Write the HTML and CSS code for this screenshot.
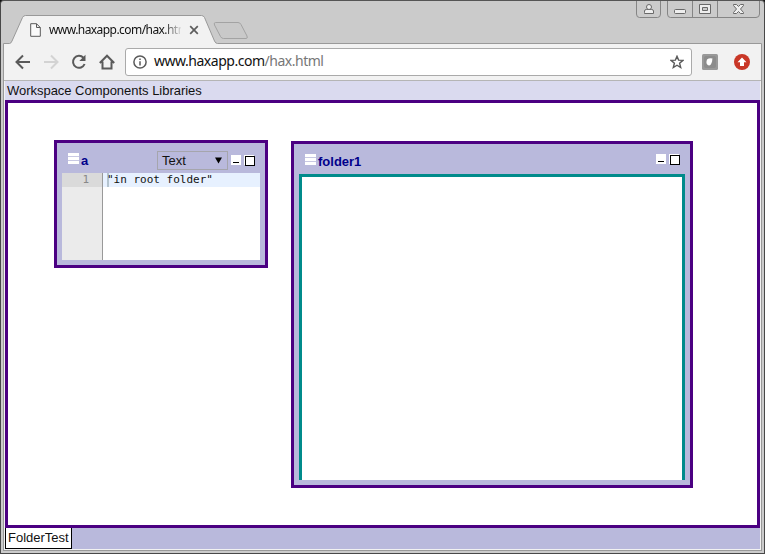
FILE: index.html
```html
<!DOCTYPE html>
<html lang="en">
<head>
<meta charset="utf-8">
<title>www.haxapp.com/hax.html</title>
<link rel="stylesheet" href="styles.css">
</head>
<body>
<div class="browser">
  <header class="tabstrip">
    <svg class="frame-art" width="765" height="44" viewBox="0 0 765 44" fill="none">
      <path d="M3.5 44V43.5H9.5Q11 43.500 12 41L22.500 17.500Q23.500 15.500 25.500 15.500H201.500Q203.500 15.500 204.500 17.500L214.500 41Q215.500 43.500 217.500 43.500H761.500V44" fill="#f2f2f2" stroke="#999"/>
      <path d="M215.500 22.500H238Q240 22.500 241 24.500L247 36Q248 38.500 246 38.500H223.500Q221.500 38.500 220.500 36.500L214.500 25Q213.500 22.500 215.500 22.500Z" fill="#c9c9c9" stroke="#a3a3a3"/>
      <g stroke="#858585">
        <path d="M636.500 1V14Q636.500 17.500 639.500 17.500H657.500Q660.500 17.500 660.500 14V1M667.500 1V14Q667.500 17.500 670.500 17.500H756Q759.500 17.500 759.500 14V1M692.500 1V17M717.500 1V17"/>
      </g>
      <g stroke="#696969" fill="#eee">
        <path d="M644.500 12.500V11Q644.500 9.500 646.500 9.500H651.500Q653.500 9.500 653.500 11V13.500H644.500Z"/>
        <circle cx="649" cy="7" r="2.500"/>
        <rect x="674.500" y="9.500" width="11" height="4" rx="1"/>
        <path fill-rule="evenodd" d="M699.500 4.500H710.500V13.500H699.500ZM702.500 7.500V10.500H707.500V7.500Z"/>
        <path d="M733.500 4.500H736.500L738.500 6.500L740.500 4.500H743.500V5.500L740.500 9L743.500 12.500V13.500H740.500L738.500 11.500L736.500 13.500H733.500V12.500L736.500 9L733.500 5.500Z"/>
      </g>
    </svg>
    <div class="tab">
      <svg width="11" height="14" viewBox="0 0 11 14" fill="#fafafa" stroke="#5b5b5b"><path d="M.7.700H6.500L10.300 4.500V13.300H.7ZM6.500.700V4.500H10.300"/></svg>
      <span class="tab-title">www.haxapp.com/hax.html</span>
      <svg class="tab-close" width="10" height="10" viewBox="0 0 10 10" stroke="#5d5d5d" stroke-width="1.700"><path d="M1.200 1.200L8.800 8.800M8.800 1.200L1.200 8.800"/></svg>
    </div>
  </header>

  <nav class="toolbar">
    <div class="nav-icons">
      <svg width="16" height="16" viewBox="0 0 16 16" fill="none" stroke="#5a5a5a" stroke-width="2"><path d="M15 8H2M8 1.500L1.500 8L8 14.500"/></svg>
      <svg width="16" height="16" viewBox="0 0 16 16" fill="none" stroke="#d3d3d3" stroke-width="2"><path d="M1 8H14M8 1.500L14.500 8L8 14.500"/></svg>
      <svg width="16" height="16" viewBox="0 0 16 16"><path d="M12.400 3.700A6 6 0 1 0 13.600 10" fill="none" stroke="#5a5a5a" stroke-width="2"/><path d="M14.500.800V7H8.300Z" fill="#5a5a5a"/></svg>
      <svg width="16" height="16" viewBox="0 0 16 16" fill="none" stroke="#5a5a5a" stroke-width="2"><path d="M.800 9L8 1.700L15.200 9M3.500 7.500V14.500H12.500V7.500"/></svg>
    </div>
    <div class="address">
      <svg width="14" height="14" viewBox="0 0 14 14" fill="none" stroke="#5a5a5a" stroke-width="1.500"><circle cx="7" cy="7" r="6.100"/><path d="M7 6.200V10.500M7 3.500V5"/></svg>
      <span class="url">www.haxapp.com<span class="path">/hax.html</span></span>
      <svg class="star" width="14" height="14" viewBox="0 0 14 14" fill="none" stroke="#5a5a5a" stroke-width="1.400"><path d="M7 1.300L8.600 5.100L12.900 5.400L9.600 8.200L10.700 12.500L7 10.200L3.300 12.500L4.400 8.200L1.100 5.400L5.400 5.100Z"/></svg>
    </div>
    <svg class="ext" width="16" height="16" viewBox="0 0 16 16"><rect width="16" height="16" rx="1.500" fill="#999"/><rect x="2" y="2" width="12" height="12" rx="2" fill="#8c8c8c"/><path d="M5 5.500Q7.500 3.500 10.500 4.500Q10 6 10.200 7Q9 11.500 7 11.500Q4 10.500 4.500 7.500Z" fill="#fff"/></svg>
    <svg class="update" width="16" height="16" viewBox="0 0 16 16"><circle cx="8" cy="8" r="8" fill="#c93727"/><path d="M8 3.500L12.500 8.300H10V12H6V8.300H3.500Z" fill="#fff"/></svg>
  </nav>

  <div class="page">
    <div class="menubar"><span>Workspace</span> <span>Components</span> <span>Libraries</span></div>
    <main class="canvas">
      <section class="window window-a">
        <div class="titlebar">
          <i class="grip"></i><b>a</b>
          <div class="select"><span>Text</span><svg width="7" height="7" viewBox="0 0 7 7"><path d="M0 .500H7L3.500 6.500Z"/></svg></div>
          <i class="control minimize"></i><i class="control maximize"></i>
        </div>
        <div class="editor">
          <div class="gutter"><div class="line-number">1</div></div>
          <div class="code"><div class="active-line">"in root folder"</div></div>
        </div>
      </section>
      <section class="window window-folder">
        <div class="titlebar">
          <i class="grip"></i><b>folder1</b>
          <i class="control minimize"></i><i class="control maximize"></i>
        </div>
        <div class="folder-body"></div>
      </section>
    </main>
    <footer class="tabs"><span class="workspace-tab">FolderTest</span></footer>
  </div>
</div>
</body>
</html>
```
FILE: styles.css
```css
* { box-sizing: border-box; }
body { margin: 0; width: 765px; height: 554px; overflow: hidden; background: #111; font-family: "Liberation Sans", Arial, sans-serif; font-size: 13px; color: #111; }
svg { display: block; flex: none; }
.browser { width: 765px; height: 554px; background: #cbcbcb; border: 1px solid #484848; border-top-color: #555; border-radius: 4px 4px 0 0; display: flex; flex-direction: column; }
.tabstrip { position: relative; height: 43px; flex: none; }
.frame-art { position: absolute; left: -1px; top: -1px; }
.tab { position: relative; display: flex; align-items: center; margin-left: 29px; padding-top: 15px; height: 43px; width: 172px; }
.tab-title { font: 12px "Noto Sans", sans-serif; letter-spacing: -.56px; margin: -2px 0 0 8px; width: 132px; white-space: nowrap; -webkit-mask-image: linear-gradient(90deg, #000 114px, transparent 134px); mask-image: linear-gradient(90deg, #000 114px, transparent 134px); }
.tab-close { margin-left: 8px; }
.toolbar { height: 36px; flex: none; margin: 0 2px; background: #f2f2f2; border-left: 1px solid #999; border-right: 1px solid #999; display: flex; align-items: center; padding: 0 11px 0 11px; }
.nav-icons { display: flex; gap: 12px; width: 110px; }
.address { width: 567px; height: 28px; border: 1px solid #aaa; border-radius: 3px; background: #fff; display: flex; align-items: center; padding: 0 7px; }
.url { font: 14px/18px "Noto Sans", sans-serif; letter-spacing: -.48px; margin: -2px 0 0 7px; white-space: nowrap; }
.path { color: #777; }
.star { margin-left: auto; }
.ext { margin-left: 10px; }
.update { margin-left: 16px; }
.page { height: 471px; flex: none; margin: 0 2px; border: 1px solid #999; border-top: 0; box-shadow: inset 0 1px #b5b5b5; padding: 1px 0 1px 1px; background: #f2f2f2; display: flex; flex-direction: column; }
.menubar { height: 19px; width: 755px; background: #dadaef; padding-left: 2px; line-height: 19px; letter-spacing: -.03px; white-space: nowrap; }
.canvas { width: 755px; height: 428px; flex: none; border: 3px solid #4b0082; background: #fff; position: relative; }
.window { position: absolute; border: 3px solid #4b0082; background: #b9b9dc; padding: 0 5px 5px; display: flex; flex-direction: column; }
.window-a { left: 46px; top: 37px; width: 214px; height: 128px; }
.window-folder { left: 283px; top: 38px; width: 402px; height: 347px; }
.titlebar { height: 30px; flex: none; display: flex; align-items: flex-start; padding: 10px 6px 0 6px; }
.grip { width: 11px; height: 11px; margin-right: 2px; background: repeating-linear-gradient(#fff 0 3px, #c8c8e3 3px 4px); }
.titlebar b { color: #00008b; line-height: 15px; margin-right: auto; }
.select { width: 71px; height: 19px; margin: -2px 3px 0 0; border: 1px solid #a5a5ad; display: flex; align-items: center; justify-content: space-between; padding: 0 5px 0 4px; }
.control { width: 10px; height: 10px; margin-top: 2px; background: #fff; position: relative; }
.control + .control { margin-left: 3px; }
.minimize::after { content: ""; position: absolute; left: 2px; top: 7px; width: 6px; height: 1px; background: #000; }
.maximize::after { content: ""; position: absolute; left: 1px; top: 1px; width: 8px; height: 8px; border: 1px solid #000; }
.editor { display: flex; flex: 1; background: #fff; font: 11px/14px "DejaVu Sans Mono", monospace; }
.gutter { width: 41px; background: #ebebeb; border-right: 1px solid #999; }
.line-number { height: 14px; background: #dadada; color: #888; text-align: right; padding-right: 13px; }
.code { flex: 1; }
.active-line { height: 14px; background: #e7f1ff; padding-left: 4px; white-space: nowrap; }
.active-line::before { content: ""; display: inline-block; width: 2px; height: 14px; margin-right: -2px; background: #b4c4cf; vertical-align: top; }
.folder-body { flex: 1; border: 3px solid #008b8b; border-bottom: 0; background: #fff; }
.window-folder .control { margin-top: 0; }
.tabs { width: 755px; height: 21px; flex: none; background: #b9b9dc; display: flex; }
.workspace-tab { height: 21px; width: 67px; border: 1px solid #000; border-top: 0; background: #fff; padding-left: 2px; line-height: 20px; }
```
